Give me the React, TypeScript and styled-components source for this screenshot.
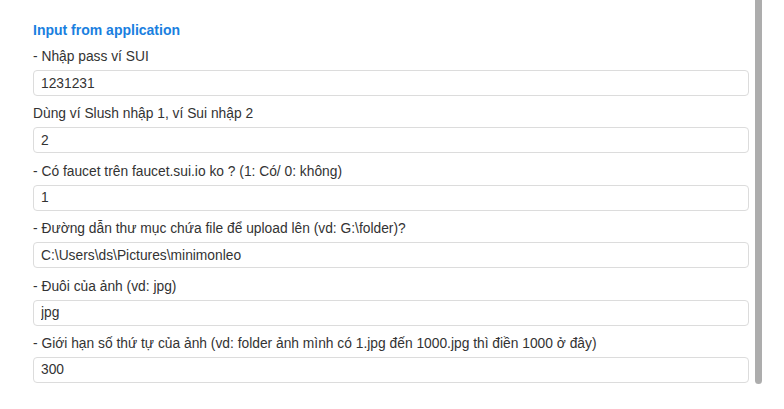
import { styled, createGlobalStyle } from "styled-components"

const GlobalStyle = createGlobalStyle`
  html, body {
    margin: 0;
    padding: 0;
    background: #fff;
  }
  body {
    font-family: "Liberation Sans", Arial, sans-serif;
    color: #333;
  }
`

type Field = {
  label: string
  value: string
}

const fields: Field[] = [
  { label: '- Nhập pass ví SUI', value: '1231231' },
  { label: 'Dùng ví Slush nhập 1, ví Sui nhập 2', value: '2' },
  { label: '- Có faucet trên faucet.sui.io ko ? (1: Có/ 0: không)', value: '1' },
  { label: '- Đường dẫn thư mục chứa file để upload lên (vd: G:\\folder)?', value: 'C:\\Users\\ds\\Pictures\\minimonleo' },
  { label: '- Đuôi của ảnh (vd: jpg)', value: 'jpg' },
  { label: '- Giới hạn số thứ tự của ảnh (vd: folder ảnh mình có 1.jpg đến 1000.jpg thì điền 1000 ở đây)', value: '300' },
]

export default function App() {
  return (
    <>
      <GlobalStyle />
      <Page>
        <Panel>
          <Title>Input from application</Title>
          {fields.map((f, i) => (
            <FieldGroup key={i}>
              <Label>{f.label}</Label>
              <Input defaultValue={f.value} readOnly />
            </FieldGroup>
          ))}
        </Panel>
        <ScrollTrack>
          <ScrollThumb />
        </ScrollTrack>
      </Page>
    </>
  )
}

const Page = styled.div`
  display: flex;
  width: 784px;
  height: 409px;
  overflow: hidden;
`

const Panel = styled.div`
  width: 716px;
  padding: 20px 0 0 33px;
  display: flex;
  flex-direction: column;
`

const Title = styled.div`
  font-size: 14px;
  line-height: 20px;
  font-weight: 700;
  color: #1a7fe0;
  margin-bottom: 7px;
`

const FieldGroup = styled.div`
  display: flex;
  flex-direction: column;
  gap: 3px;
  margin-bottom: 8.4px;
`

const Label = styled.div`
  font-size: 13.8px;
  line-height: 20px;
  white-space: nowrap;
`

const Input = styled.input`
  box-sizing: border-box;
  width: 716px;
  height: 26px;
  padding: 0 7px;
  border: 1px solid #dcdcdc;
  border-radius: 4px;
  font-family: inherit;
  font-size: 13.8px;
  color: #333;
  outline: none;
`

const ScrollTrack = styled.div`
  margin-left: 6px;
  width: 7px;
  height: 384px;
`

const ScrollThumb = styled.div`
  width: 7px;
  height: 100%;
  background: #adadad;
  border-radius: 0 0 4px 4px;
`
